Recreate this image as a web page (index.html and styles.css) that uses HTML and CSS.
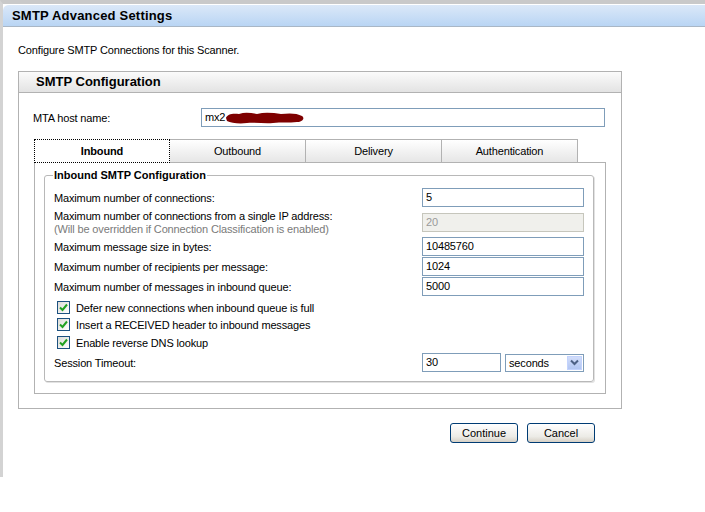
FILE: index.html
```html
<!DOCTYPE html>
<html>
<head>
<meta charset="utf-8">
<link rel="stylesheet" href="styles.css">
</head>
<body>
<div class="window">
  <div class="titlebar"><span class="title">SMTP Advanced Settings</span></div>
  <div class="content">
    <p class="intro">Configure SMTP Connections for this Scanner.</p>
    <div class="panel">
      <div class="panel-head">SMTP Configuration</div>
      <div class="panel-body">
        <div class="host-row">
          <span class="host-label">MTA host name:</span>
          <div class="field host">mx2<svg class="redact" width="80" height="14" viewBox="0 0 80 14"><path d="M1 7 C2 3 8 2 14 3 C20 1 26 2 32 3 C40 1 48 2 56 3 C64 2 72 2 77 5 C80 7 78 11 72 11 C64 12 56 11 48 12 C40 13 30 11 22 12 C14 13 6 12 2 10 Z" fill="#7e0000"/></svg></div>
        </div>
        <div class="tabs">
          <div class="tab active">Inbound</div>
          <div class="tab">Outbound</div>
          <div class="tab">Delivery</div>
          <div class="tab">Authentication</div>
        </div>
        <div class="tab-body">
          <fieldset class="group">
            <legend>Inbound SMTP Configuration</legend>
            <div class="row r1">
              <span class="lbl">Maximum number of connections:</span>
              <div class="field num">5</div>
            </div>
            <div class="row r2">
              <span class="lbl two">Maximum number of connections from a single IP address:<br><span class="note">(Will be overridden if Connection Classification is enabled)</span></span>
              <div class="field num disabled">20</div>
            </div>
            <div class="row r3">
              <span class="lbl">Maximum message size in bytes:</span>
              <div class="field num">10485760</div>
            </div>
            <div class="row r4">
              <span class="lbl">Maximum number of recipients per message:</span>
              <div class="field num">1024</div>
            </div>
            <div class="row r5">
              <span class="lbl">Maximum number of messages in inbound queue:</span>
              <div class="field num">5000</div>
            </div>
            <div class="check c1"><span class="box"><svg width="9" height="9" viewBox="0 0 9 9"><path d="M1 4.5 L3.5 7 L8 1.5" fill="none" stroke="#21a121" stroke-width="2"/></svg></span>Defer new connections when inbound queue is full</div>
            <div class="check c2"><span class="box"><svg width="9" height="9" viewBox="0 0 9 9"><path d="M1 4.5 L3.5 7 L8 1.5" fill="none" stroke="#21a121" stroke-width="2"/></svg></span>Insert a RECEIVED header to inbound messages</div>
            <div class="check c3"><span class="box"><svg width="9" height="9" viewBox="0 0 9 9"><path d="M1 4.5 L3.5 7 L8 1.5" fill="none" stroke="#21a121" stroke-width="2"/></svg></span>Enable reverse DNS lookup</div>
            <div class="row session">
              <span class="lbl">Session Timeout:</span>
              <div class="timeout">
                <div class="field short">30</div>
                <div class="select"><span class="sel-text">seconds</span><span class="sel-btn"><svg width="9" height="7" viewBox="0 0 9 7"><path d="M1 1.5 L4.5 5 L8 1.5" fill="none" stroke="#4d6185" stroke-width="2"/></svg></span></div>
              </div>
            </div>
          </fieldset>
        </div>
      </div>
    </div>
    <div class="actions">
      <button class="btn">Continue</button>
      <button class="btn">Cancel</button>
    </div>
  </div>
</div>
</body>
</html>
```
FILE: styles.css
```css
html, body {
  margin: 0;
  background: #fff;
}
body {
  font-family: "Liberation Sans", Arial, sans-serif;
  font-size: 11px;
  letter-spacing: -0.15px;
  color: #000;
}
.window {
  width: 702px;
  height: 473px;
  border-top: 4px solid #c9c9c9;
  border-left: 3px solid #d3d3d3;
  background: #fff;
}
.titlebar {
  height: 21px;
  border-top: 1px solid #ffffff;
  border-bottom: 1px solid #a9b7c6;
  border-top-left-radius: 6px;
  background: linear-gradient(#dbe8f8, #b9d5f4);
  display: flex;
  align-items: center;
  padding-left: 9px;
}
.title {
  font-weight: bold;
  font-size: 13px;
  letter-spacing: 0.2px;
  color: #000;
}
.content {
  padding-left: 15px;
}
.intro {
  margin: 16px 0 0 0;
  line-height: 14px;
  height: 14px;
}
.panel {
  margin-top: 14px;
  width: 602px;
  border: 1px solid #b2b2b2;
}
.panel-head {
  height: 20px;
  border-bottom: 1px solid #b2b2b2;
  background: linear-gradient(#fbfbfb, #e3e3e3);
  font-weight: bold;
  font-size: 13px;
  letter-spacing: 0;
  line-height: 20px;
  padding-left: 17px;
}
.panel-body {
  padding: 15px 15px 14px 15px;
}
.host-row {
  display: flex;
  align-items: center;
  height: 19px;
}
.host-label {
  width: 168px;
  margin-left: -1px;
}
.field {
  box-sizing: border-box;
  height: 19px;
  border: 1px solid #7f9db9;
  background: #fff;
  padding-left: 3px;
  line-height: 17px;
  display: flex;
  align-items: center;
}
.host {
  width: 404px;
}
.redact {
  display: block;
}
.tabs {
  display: flex;
  margin-top: 12px;
  height: 23px;
}
.tab {
  box-sizing: border-box;
  width: 136px;
  height: 23px;
  border: 1px solid #b2b2b2;
  border-bottom: none;
  border-left: none;
  background: linear-gradient(#ffffff, #e6e6e6);
  text-align: center;
  line-height: 22px;
}
.tab:first-child {
  border-left: 1px solid #b2b2b2;
}
.tab.active {
  background: #fff;
  font-weight: bold;
  border: 1px dotted #000;
  height: 24px;
  margin-bottom: -1px;
  position: relative;
}
.tab-body {
  box-sizing: border-box;
  width: 572px;
  border: 1px solid #b2b2b2;
  padding: 6px 11px 11px 9px;
}
.group {
  margin: 0;
  padding: 6px 9px 9px 9px;
  border: 1px solid #b8b8b8;
  border-radius: 3px;
  box-shadow: 1px 1px 0 #e2e2e2;
}
.group legend {
  font-weight: bold;
  font-size: 11px;
  line-height: 13px;
  padding: 0 1px;
  margin-left: -1px;
  letter-spacing: 0;
}
.row {
  display: flex;
  justify-content: space-between;
  align-items: center;
  height: 19px;
}
.num {
  width: 162px;
}
.r2 {
  height: 26px;
  align-items: flex-start;
  margin-top: 3px;
}
.r2 .field {
  margin-top: 3px;
}
.lbl.two {
  line-height: 13px;
}
.note {
  color: #7a7a7a;
}
.disabled {
  background: #f0f0ec;
  border-color: #c6c6bc;
  color: #9a9a9a;
}
.r3 { margin-top: 1px; }
.r4 { margin-top: 1px; }
.r5 { margin-top: 1px; }
.check {
  display: flex;
  align-items: center;
  height: 17px;
  padding-left: 3px;
}
.c1 { margin-top: 3px; }
.c2 { margin-top: 0; }
.c3 { margin-top: 1px; }
.box {
  box-sizing: border-box;
  width: 13px;
  height: 13px;
  border: 1px solid #1c5180;
  background: linear-gradient(135deg, #dcdcd7, #ffffff);
  display: flex;
  align-items: center;
  justify-content: center;
  margin-right: 6px;
}
.box svg {
  display: block;
}
.session {
  margin-top: 2px;
}
.timeout {
  display: flex;
  align-items: center;
  gap: 4px;
}
.short {
  width: 79px;
}
.select {
  box-sizing: border-box;
  width: 79px;
  height: 18px;
  border: 1px solid #7f9db9;
  display: flex;
  align-items: center;
  justify-content: space-between;
  padding: 0 1px 0 3px;
}
.sel-btn {
  width: 15px;
  height: 14px;
  background: linear-gradient(#d2ddfa, #b2c6f2);
  border: 1px solid #c3d3fd;
  box-sizing: border-box;
  display: flex;
  align-items: center;
  justify-content: center;
}
.sel-btn svg {
  display: block;
}
.actions {
  width: 604px;
  box-sizing: border-box;
  display: flex;
  justify-content: flex-end;
  gap: 9px;
  padding-right: 27px;
  margin-top: 14px;
}
.btn {
  box-sizing: border-box;
  width: 68px;
  height: 20px;
  border: 1px solid #003c74;
  border-radius: 3px;
  background: linear-gradient(#ffffff, #ecebe6 70%, #d6d0c5);
  font-family: "Liberation Sans", Arial, sans-serif;
  font-size: 11px;
  color: #000;
  padding: 0;
}
```
